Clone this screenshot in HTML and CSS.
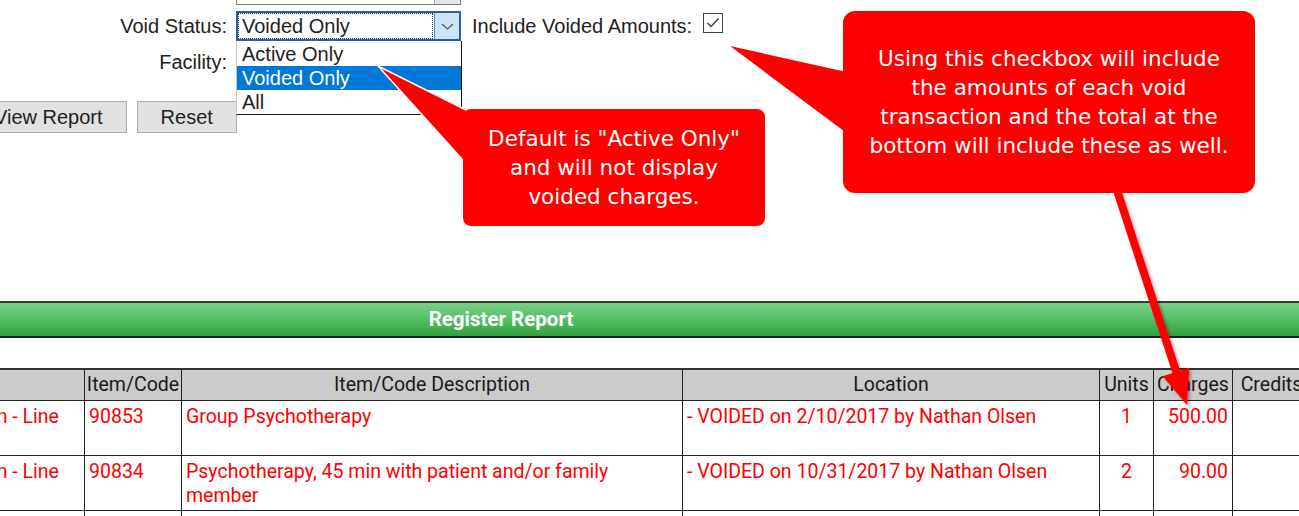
FILE: index.html
```html
<!DOCTYPE html>
<html lang="en">
<head>
    <meta charset="UTF-8">
    <meta name="viewport" content="width=device-width, initial-scale=1.0">
    <title>Register Report</title>
    <link rel="stylesheet" href="styles.css">
</head>
<body>
<div class="page">

    <!-- Report filters -->
    <div class="filters">
        <label class="field-label">Filter:</label>
        <div class="field">
            <div class="select select-plain">
                <span class="select-value"></span>
                <span class="select-btn"></span>
            </div>
        </div>

        <label class="field-label">Void Status:</label>
        <div class="field">
            <div class="select select-open">
                <span class="select-value">Voided Only</span>
                <span class="select-btn">
                    <svg width="13" height="7" viewBox="0 0 13 7"><polyline points="1,1 6.5,6 12,1" fill="none" stroke="#555" stroke-width="1.2"/></svg>
                </span>
                <ul class="dropdown-list">
                    <li>Active Only</li>
                    <li class="selected">Voided Only</li>
                    <li>All</li>
                </ul>
            </div>
            <span class="inline-label">Include Voided Amounts:</span>
            <span class="checkbox">
                <svg width="20" height="20" viewBox="0 0 20 20"><rect x="0.5" y="0.5" width="19" height="19" fill="#fff" stroke="#444"/><polyline points="4.5,10 8,13.5 15.5,5.5" fill="none" stroke="#444" stroke-width="1.5"/></svg>
            </span>
        </div>

        <label class="field-label">Facility:</label>
        <div class="field">
            <div class="select select-plain">
                <span class="select-value"></span>
                <span class="select-btn"></span>
            </div>
        </div>
    </div>

    <div class="actions">
        <button class="btn">View Report</button>
        <button class="btn">Reset</button>
    </div>

    <!-- Report output -->
    <div class="report">
        <div class="report-title">Register Report</div>
        <table class="report-table">
            <colgroup>
                <col style="width:129px">
                <col style="width:263px">
                <col style="width:97px">
                <col style="width:501px">
                <col style="width:417px">
                <col style="width:54px">
                <col style="width:79px">
                <col style="width:78px">
            </colgroup>
            <thead>
                <tr>
                    <th>Date</th>
                    <th>Type</th>
                    <th>Item/Code</th>
                    <th>Item/Code Description</th>
                    <th>Location</th>
                    <th>Units</th>
                    <th>Charges</th>
                    <th>Credits</th>
                </tr>
            </thead>
            <tbody>
                <tr class="voided">
                    <td>02/08/2017</td>
                    <td>Charge from Session - Line</td>
                    <td>90853</td>
                    <td>Group Psychotherapy</td>
                    <td>- VOIDED on 2/10/2017 by Nathan Olsen</td>
                    <td class="num-center">1</td>
                    <td class="num">500.00</td>
                    <td class="num"></td>
                </tr>
                <tr class="voided">
                    <td>10/30/2017</td>
                    <td>Charge from Session - Line</td>
                    <td>90834</td>
                    <td>Psychotherapy, 45 min with patient and/or family member</td>
                    <td>- VOIDED on 10/31/2017 by Nathan Olsen</td>
                    <td class="num-center">2</td>
                    <td class="num">90.00</td>
                    <td class="num"></td>
                </tr>
                <tr>
                    <td>11/02/2017</td>
                    <td>Charge from Session - Line</td>
                    <td>90837</td>
                    <td>Psychotherapy, 60 min</td>
                    <td>Main Office</td>
                    <td class="num-center">1</td>
                    <td class="num">150.00</td>
                    <td class="num"></td>
                </tr>
            </tbody>
        </table>
    </div>

    <!-- Help notes drawn over the form -->
    <svg class="notes" width="1299" height="516" viewBox="0 0 1299 516">
        <defs>
            <filter id="soft" x="-20%" y="-20%" width="140%" height="140%">
                <feDropShadow dx="2" dy="2" stdDeviation="1.5" flood-color="#000" flood-opacity="0.35"/>
            </filter>
        </defs>
        <polygon points="378,66 480,117 480,179" fill="#fe0000" stroke="#fff" stroke-width="1.5" stroke-linejoin="miter"/>
        <polygon points="730,46 860,75 860,143" fill="#fe0000"/>
        <g filter="url(#soft)">
            <line x1="1112" y1="175" x2="1177" y2="374" stroke="#fe0000" stroke-width="8"/>
            <polygon points="1187,405 1162.7,376.3 1189.3,367.7" fill="#fe0000"/>
        </g>
    </svg>

    <div class="callout callout-default">Default is "Active Only"<br>and will not display<br>voided charges.</div>
    <div class="callout callout-include">Using this checkbox will include<br>the amounts of each void<br>transaction and the total at the<br>bottom will include these as well.</div>

</div>
</body>
</html>
```

FILE: styles.css
```css
body {
    margin: 0;
    font-family: "Liberation Sans", Arial, sans-serif;
    color: #222;
    background: #fff;
    overflow: hidden;
}
.page {
    position: relative;
    width: 1299px;
    height: 516px;
    overflow: hidden;
}

/* Filter form */
.filters {
    display: grid;
    grid-template-columns: 266px auto;
    grid-auto-rows: 30px;
    row-gap: 6px;
    margin: -25px 0 0 -30px;
    font-size: 20px;
}
.field-label {
    display: flex;
    align-items: center;
    justify-content: flex-end;
    padding-right: 9px;
}
.field {
    display: flex;
    align-items: center;
}
.select {
    position: relative;
    display: flex;
    width: 225px;
    height: 30px;
    box-sizing: border-box;
    background: #fff;
}
.select-plain {
    border: 1px solid #7a7a7a;
}
.select-plain .select-value {
    padding-left: 4px;
    line-height: 28px;
}
.select-plain .select-btn {
    width: 25px;
    background: #e5e5e5;
    border-left: 1px solid #adadad;
}
.select-value {
    flex: 1;
    white-space: nowrap;
    overflow: hidden;
}
.select-open {
    border: 2px solid #2c5f99;
    z-index: 2;
}
.select-open .select-value {
    border: 1px dotted #333;
    padding-left: 3px;
    line-height: 24px;
    margin: 0 1px 0 0;
}
.select-btn {
    display: flex;
    align-items: center;
    justify-content: center;
}
.select-open .select-btn {
    width: 24px;
    background: #cce4f7;
    border-left: 1px solid #5b8cc0;
}
.dropdown-list {
    position: absolute;
    top: calc(100% + 2px);
    left: -2px;
    width: 226px;
    box-sizing: border-box;
    margin: 0;
    padding: 1px 0 0;
    list-style: none;
    background: #fff;
    border: 1px solid #111;
    border-top: none;
    border-left-color: #c8c8c8;
}
.dropdown-list li {
    height: 24px;
    line-height: 24px;
    padding-left: 5px;
}
.dropdown-list li.selected {
    background: #0078d7;
    color: #fff;
}
.inline-label {
    margin-left: 11px;
}
.checkbox {
    display: flex;
    margin-left: 11px;
    margin-top: -6px;
}

.actions {
    display: flex;
    gap: 10px;
    margin: 24px 0 0 -30px;
}
.btn {
    height: 32px;
    padding: 0 23px;
    font-family: "Liberation Sans", Arial, sans-serif;
    font-size: 20px;
    color: #222;
    background: #e1e1e1;
    border: 1px solid #adadad;
}

/* Report */
.report {
    width: 1618px;
    margin: 168px 0 0 -308px;
}
.report-title {
    height: 33px;
    line-height: 33px;
    border-top: 2px solid #3a3a3a;
    border-bottom: 2px solid #1f1f1f;
    background: linear-gradient(#76d286, #55bd63 50%, #31a23e);
    color: #fff;
    text-align: center;
    font-family: Roboto, sans-serif;
    font-weight: 700;
    font-size: 20.5px;
}
.report-table {
    width: 1618px;
    margin-top: 30px;
    table-layout: fixed;
    border-collapse: collapse;
    border-top: 2px solid #333;
    font-family: Roboto, "Liberation Sans", sans-serif;
    font-size: 19.5px;
}
.report-table th,
.report-table td {
    border: 1px solid #222;
    white-space: normal;
    overflow: hidden;
}
.report-table thead tr {
    height: 31px;
}
.report-table th {
    padding: 0;
    background: #cbcbcb;
    font-weight: 400;
    color: #1a1a1a;
    text-align: center;
}
.report-table tbody tr {
    height: 55px;
}
.report-table td {
    padding: 4px 4px 0;
    vertical-align: top;
    line-height: 24px;
}
.report-table .voided td {
    color: #ff0000;
}
.report-table .num {
    text-align: right;
}
.report-table .num-center {
    text-align: center;
}

/* Callout notes, kept above the open dropdown */
.notes {
    position: absolute;
    top: 0;
    left: 0;
    z-index: 5;
    pointer-events: none;
}
.callout {
    position: absolute;
    z-index: 6;
    display: flex;
    align-items: center;
    justify-content: center;
    background: #fe0000;
    color: #fff;
    font-family: "DejaVu Sans", sans-serif;
    font-size: 21.5px;
    line-height: 29px;
    text-align: center;
}
.callout-default {
    left: 463px;
    top: 109px;
    width: 302px;
    height: 117px;
    border-radius: 8px;
}
.callout-include {
    left: 843px;
    top: 11px;
    width: 412px;
    height: 182px;
    border-radius: 12px;
}
```
